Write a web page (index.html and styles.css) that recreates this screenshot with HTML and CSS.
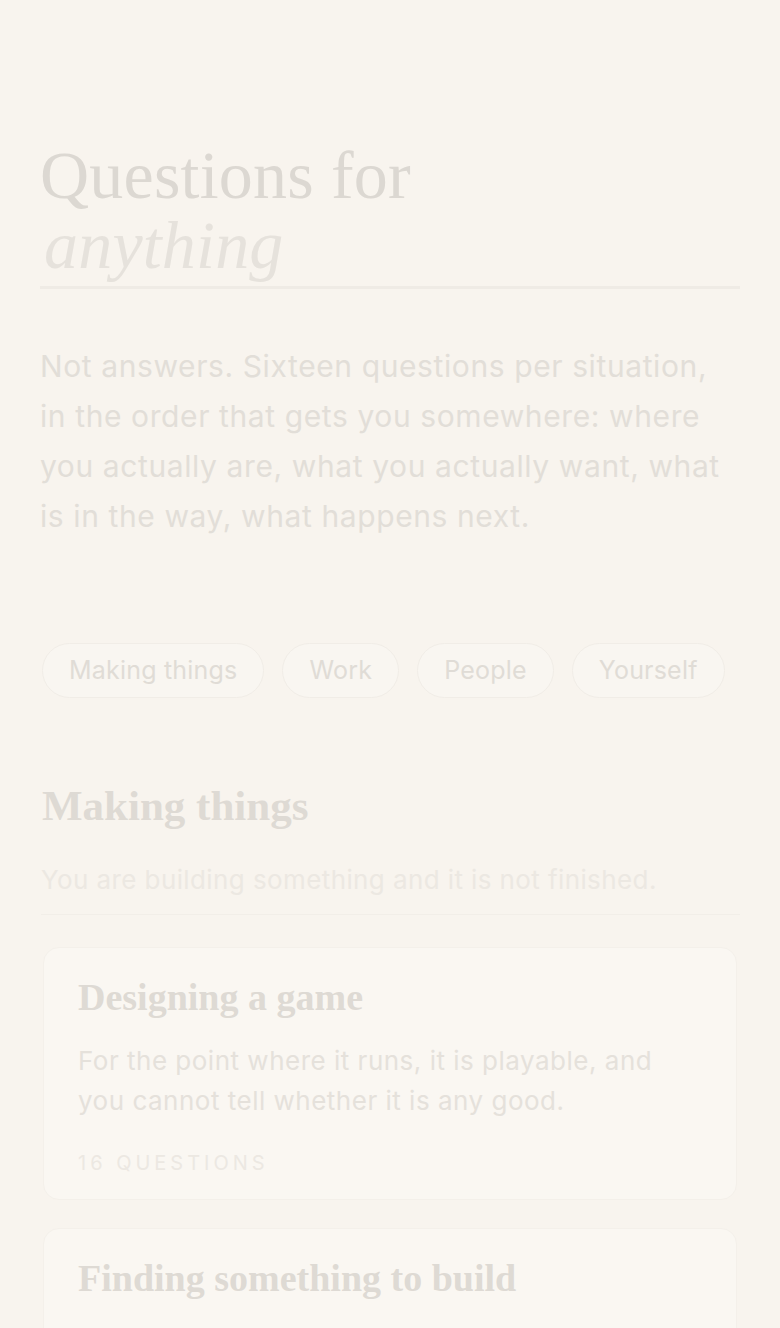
FILE: index.html
```html
<!DOCTYPE html>
<html lang="en">
<head>
<meta charset="utf-8">
<title>Questions for anything</title>
<link rel="stylesheet" href="styles.css">
</head>
<body>
<main class="page">
  <header class="hero">
    <h1 class="title">Questions for<br><em>anything</em></h1>
    <p class="lede">Not answers. Sixteen questions per situation, in the order that gets you somewhere: where you actually are, what you actually want, what is in the way, what happens next.</p>
  </header>
  <nav class="pills">
    <a class="pill">Making things</a>
    <a class="pill">Work</a>
    <a class="pill">People</a>
    <a class="pill">Yourself</a>
  </nav>
  <section class="section">
    <h2 class="section-title">Making things</h2>
    <p class="section-sub">You are building something and it is not finished.</p>
    <div class="cards">
      <article class="card">
        <h3 class="card-title">Designing a game</h3>
        <p class="card-desc">For the point where it runs, it is playable, and you cannot tell whether it is any good.</p>
        <div class="card-meta">16 questions</div>
      </article>
      <article class="card">
        <h3 class="card-title">Finding something to build</h3>
        <p class="card-desc">For when you want to make something and have no idea what it should be.</p>
        <div class="card-meta">16 questions</div>
      </article>
    </div>
  </section>
</main>
</body>
</html>
```
FILE: styles.css
```css
html, body {
  margin: 0;
  padding: 0;
  background: #f8f4ee;
}
body {
  font-family: Inter, "Noto Sans", sans-serif;
  color: #e1ddd7;
}
.page {
  padding: 140px 40px 0;
}
.title {
  margin: 0;
  font-family: "Liberation Serif", "DejaVu Serif", serif;
  font-weight: 400;
  font-size: 68px;
  line-height: 70px;
  color: #dcd8d2;
  padding-bottom: 6px;
  border-bottom: 3px solid #efebe5;
  letter-spacing: 0.2px;
}
.title em {
  font-style: italic;
  color: #e6e2dc;
  padding-left: 4px;
}
.lede {
  margin: 52px 0 0;
  font-size: 30px;
  line-height: 50px;
  color: #e2ded8;
  letter-spacing: 0.6px;
}
.pills {
  display: flex;
  gap: 18px;
  margin-top: 102px;
  padding-left: 2px;
}
.pill {
  display: block;
  padding: 0 26px;
  height: 53px;
  line-height: 53px;
  border: 1.5px solid #f1ede7;
  border-radius: 28px;
  background: #f9f6f1;
  font-size: 25px;
  letter-spacing: 0.2px;
  color: #e0dcd6;
}
.section {
  margin-top: 82px;
}
.section-title {
  margin: 0 0 0 2px;
  font-family: "Liberation Serif", "DejaVu Serif", serif;
  font-weight: 700;
  font-size: 43px;
  line-height: 52px;
  color: #dedad4;
}
.section-sub {
  margin: 30px 0 0 1px;
  font-size: 26px;
  line-height: 36px;
  letter-spacing: 0.4px;
  color: #ece8e2;
  padding-bottom: 16px;
  border-bottom: 1.5px solid #f2eee8;
}
.cards {
  display: flex;
  flex-direction: column;
  gap: 28px;
  margin-top: 32px;
  padding: 0 3px;
}
.card {
  background: #faf7f2;
  border: 1px solid #f4f0ea;
  border-radius: 16px;
  padding: 26px 34px 22px;
}
.card-title {
  margin: 0;
  font-family: "Liberation Serif", "DejaVu Serif", serif;
  font-weight: 700;
  font-size: 38px;
  line-height: 46px;
  color: #dedad4;
}
.card-desc {
  margin: 21px 0 0;
  font-size: 26px;
  line-height: 40px;
  letter-spacing: 0.5px;
  color: #e5e1db;
}
.card-meta {
  margin-top: 28px;
  font-size: 20px;
  line-height: 28px;
  letter-spacing: 4px;
  text-transform: uppercase;
  color: #ece8e2;
}
```
